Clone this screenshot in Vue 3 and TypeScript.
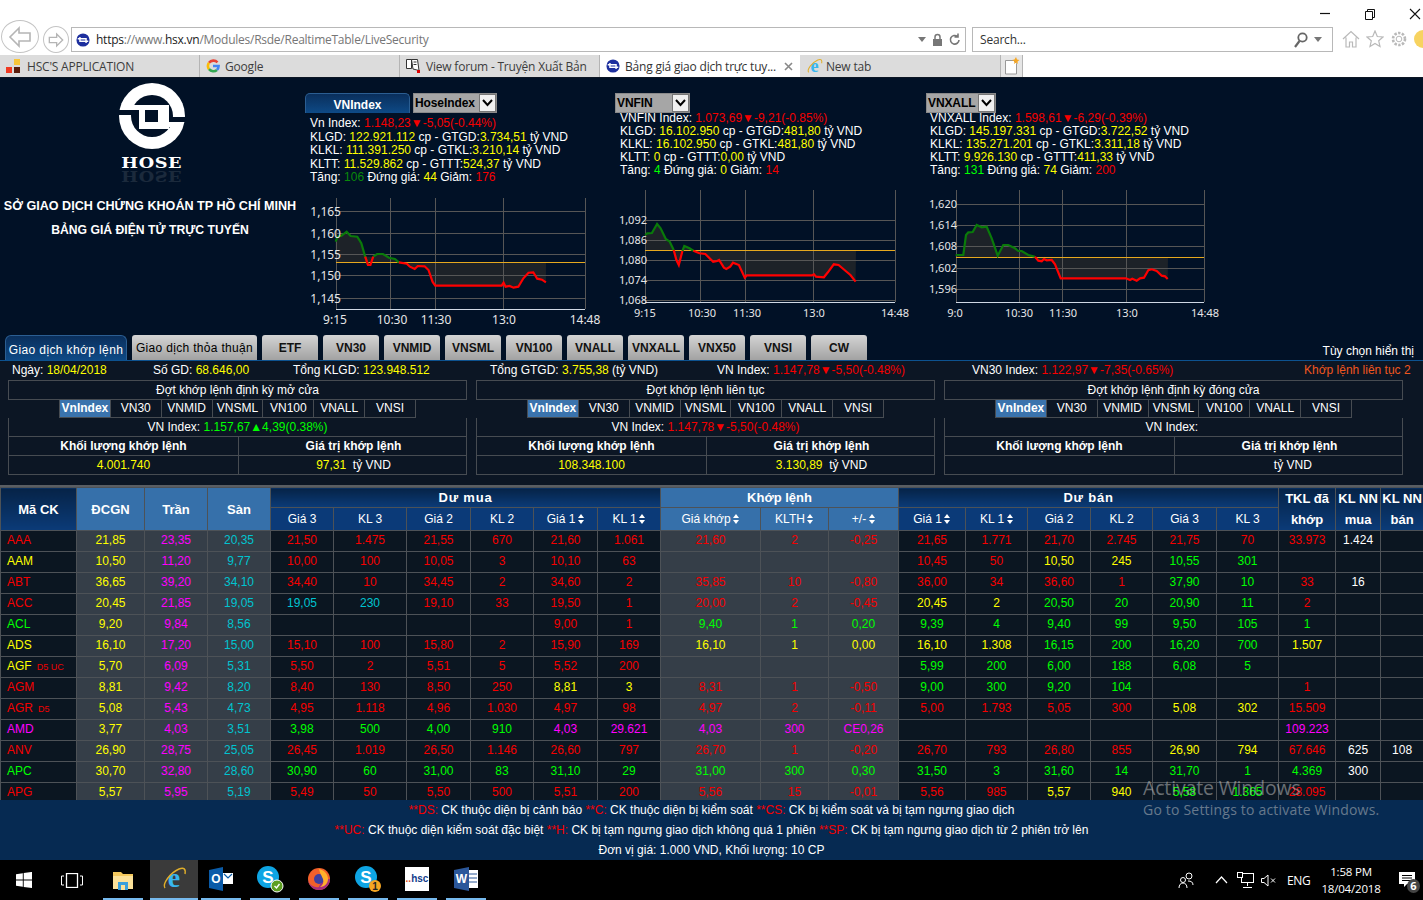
<script setup lang="ts">
type Seg = [string, string];

const browserTabs = ["Google", "View forum - Truyện Xuất Bản"];

const panels: { key: string; tight: boolean; lines: Seg[][] }[] = [
  {
    key: "vnindex",
    tight: false,
    lines: [
      [["Vn Index: ", "w"], ["1.148,23▼-5,05(-0.44%)", "r"]],
      [["KLGD: ", "w"], ["122.921.112", "y"], [" cp - GTGD:", "w"], ["3.734,51", "y"], [" tỷ VND", "w"]],
      [["KLKL: ", "w"], ["111.391.250", "y"], [" cp - GTKL:", "w"], ["3.210,14", "y"], [" tỷ VND", "w"]],
      [["KLTT: ", "w"], ["11.529.862", "y"], [" cp - GTTT:", "w"], ["524,37", "y"], [" tỷ VND", "w"]],
      [["Tăng: ", "w"], ["106", "dg"], [" Đứng giá: ", "w"], ["44", "y"], [" Giảm: ", "w"], ["176", "r"]],
    ],
  },
  {
    key: "vnfin",
    tight: true,
    lines: [
      [["VNFIN Index: ", "w"], ["1.073,69▼-9,21(-0.85%)", "r"]],
      [["KLGD: ", "w"], ["16.102.950", "y"], [" cp - GTGD:", "w"], ["481,80", "y"], [" tỷ VND", "w"]],
      [["KLKL: ", "w"], ["16.102.950", "y"], [" cp - GTKL:", "w"], ["481,80", "y"], [" tỷ VND", "w"]],
      [["KLTT: ", "w"], ["0", "y"], [" cp - GTTT:", "w"], ["0,00", "y"], [" tỷ VND", "w"]],
      [["Tăng: ", "w"], ["4", "g"], [" Đứng giá: ", "w"], ["0", "y"], [" Giảm: ", "w"], ["14", "r"]],
    ],
  },
  {
    key: "vnxall",
    tight: true,
    lines: [
      [["VNXALL Index: ", "w"], ["1.598,61▼-6,29(-0.39%)", "r"]],
      [["KLGD: ", "w"], ["145.197.331", "y"], [" cp - GTGD:", "w"], ["3.722,52", "y"], [" tỷ VND", "w"]],
      [["KLKL: ", "w"], ["135.271.201", "y"], [" cp - GTKL:", "w"], ["3.311,18", "y"], [" tỷ VND", "w"]],
      [["KLTT: ", "w"], ["9.926.130", "y"], [" cp - GTTT:", "w"], ["411,33", "y"], [" tỷ VND", "w"]],
      [["Tăng: ", "w"], ["131", "g"], [" Đứng giá: ", "w"], ["74", "y"], [" Giảm: ", "w"], ["200", "r"]],
    ],
  },
];

// points were read off the zoomed reference, so each chart has its own scale
const scale = (raw: number[][], ox: number, sx: number) =>
  raw.map(([x, y]) => [ox + x / sx, 185 + y / 3]);
const join = (p: number[][]) => p.map((q) => q.map((n) => n.toFixed(1)).join(",")).join(" ");

interface Chart {
  x0: number;
  size: number;
  top: number;
  bottom: number;
  left: number;
  right: number;
  rows: { y: number; label: string }[];
  cols: { x: number; label: string; at: number }[];
  labelY: number;
  labelX: number;
  refY: number;
  shadeEnd: number;
  green: string[];
  red: string[];
  shade: string;
}

const buildChart = (
  base: Omit<Chart, "green" | "red" | "shade">,
  greens: number[][][],
  reds: number[][][],
  all: number[][],
): Chart => ({
  ...base,
  green: greens.map(join),
  red: reds.map(join),
  shade:
    join(all) +
    ` ${base.shadeEnd},${base.refY} ${all[0][0]},${base.refY}`,
});

const c1g = scale([[90,170],[95,155],[105,152],[118,140],[128,153],[145,155],[155,175],[165,215],[172,240]], 300, 2.529);
const c1r0 = scale([[165,215],[172,240],[178,240],[185,215]], 300, 2.529);
const c1g2 = scale([[185,215],[195,207],[210,207],[225,218],[240,222],[250,232]], 300, 2.529);
const c1r = scale([[250,232],[270,236],[278,245],[290,252],[298,243],[315,244],[325,255],[335,290],[342,302],[510,302],[515,293],[520,305],[530,303],[540,308],[552,305],[565,280],[578,263],[590,262],[600,281],[612,284],[622,292]], 300, 2.529);

const c2g = scale([[873,150],[878,145],[890,144],[903,117],[912,130],[925,162],[935,170],[945,195]], 300, 2.529);
const c2r0 = scale([[945,195],[952,225],[958,240],[967,198]], 300, 2.529);
const c2g2 = scale([[967,198],[972,183],[985,190],[995,197]], 300, 2.529);
const c2r = scale([[995,197],[1010,205],[1025,207],[1045,230],[1055,228],[1060,225],[1072,248],[1078,252],[1088,245],[1095,233],[1110,240],[1125,278],[1130,271],[1295,271],[1300,268],[1305,275],[1325,277],[1335,262],[1350,238],[1362,240],[1380,258],[1392,270],[1405,290]], 300, 2.529);

const c3g = scale([[107,210],[130,210],[138,150],[145,142],[158,141],[170,120],[185,127],[200,125],[215,160],[233,212],[250,180],[265,180],[285,190],[295,198],[305,198],[325,210],[345,215]], 920, 3);
const c3r = scale([[345,215],[355,227],[365,229],[372,222],[380,226],[395,225],[405,238],[422,280],[618,280],[630,285],[637,281],[650,287],[660,280],[672,278],[685,256],[695,253],[710,258],[725,272],[735,274],[743,282]], 920, 3);

const charts: Chart[] = [
  buildChart(
    {
      x0: 305, size: 12, top: 198, bottom: 309, left: 336, right: 585,
      rows: [
        { y: 211, label: "1,165" }, { y: 233, label: "1,160" }, { y: 254, label: "1,155" },
        { y: 275, label: "1,150" }, { y: 298, label: "1,145" },
      ],
      cols: [
        { x: 336, label: "9:15", at: 335 }, { x: 390, label: "10:30", at: 392 }, { x: 435, label: "11:30", at: 436 },
        { x: 503, label: "13:0", at: 504 }, { x: 585, label: "14:48", at: 585 },
      ],
      labelY: 324, labelX: 341, refY: 262, shadeEnd: 546,
    },
    [c1g, c1g2], [c1r0, c1r], [...c1g.slice(0, 8), ...c1g2, ...c1r],
  ),
  buildChart(
    {
      x0: 615, size: 11, top: 190, bottom: 302, left: 645, right: 895,
      rows: [
        { y: 220, label: "1,092" }, { y: 240, label: "1,086" }, { y: 260, label: "1,080" },
        { y: 280, label: "1,074" }, { y: 300, label: "1,068" },
      ],
      cols: [
        { x: 645, label: "9:15", at: 645 }, { x: 700, label: "10:30", at: 702 }, { x: 745, label: "11:30", at: 747 },
        { x: 813, label: "13:0", at: 814 }, { x: 895, label: "14:48", at: 895 },
      ],
      labelY: 317, labelX: 647, refY: 250, shadeEnd: 856,
    },
    [c2g, c2g2], [c2r0, c2r], [...c2g, ...c2r0, ...c2g2, ...c2r],
  ),
  buildChart(
    {
      x0: 925, size: 11, top: 190, bottom: 302, left: 956, right: 1204,
      rows: [
        { y: 204, label: "1,620" }, { y: 225, label: "1,614" }, { y: 246, label: "1,608" },
        { y: 268, label: "1,602" }, { y: 289, label: "1,596" },
      ],
      cols: [
        { x: 956, label: "9:0", at: 955 }, { x: 1019, label: "10:30", at: 1019 }, { x: 1062, label: "11:30", at: 1063 },
        { x: 1126, label: "13:0", at: 1127 }, { x: 1204, label: "14:48", at: 1205 },
      ],
      labelY: 317, labelX: 957, refY: 257, shadeEnd: 1168,
    },
    [c3g], [c3r], [...c3g, ...c3r],
  ),
];

const marketTabs = [
  { label: "Giao dịch thỏa thuận", wide: true },
  ...["ETF", "VN30", "VNMID", "VNSML", "VN100", "VNALL", "VNXALL", "VNX50", "VNSI", "CW"].map((label) => ({ label, wide: false })),
];

const sessionTabs = ["VnIndex", "VN30", "VNMID", "VNSML", "VN100", "VNALL", "VNSI"];
const sessions: { title: string; index: Seg[]; vol: string; val: string }[] = [
  { title: "Đợt khớp lệnh định kỳ mở cửa", index: [["1.157,67▲4,39(0.38%)", "g"]], vol: "4.001.740", val: "97,31" },
  { title: "Đợt khớp lệnh liên tục", index: [["1.147,78▼-5,50(-0.48%)", "r"]], vol: "108.348.100", val: "3.130,89" },
  { title: "Đợt khớp lệnh định kỳ đóng cửa", index: [], vol: "", val: "" },
];

const colWidths = [76, 68, 63, 63, 63, 73, 64, 63, 64, 63, 100, 68, 70, 67, 62, 63, 62, 64, 62, 57, 45, 43];

const buyHead = [
  { t: "Giá 3" }, { t: "KL 3" }, { t: "Giá 2" }, { t: "KL 2" }, { t: "Giá 1", sort: true }, { t: "KL 1", sort: true },
];
const matchHead = [{ t: "Giá khớp", sort: true }, { t: "KLTH", sort: true }, { t: "+/-", sort: true }];
const sellHead = [
  { t: "Giá 1", sort: true }, { t: "KL 1", sort: true }, { t: "Giá 2" }, { t: "KL 2" }, { t: "Giá 3" }, { t: "KL 3" },
];

// first letter of each cell is its colour, "_" is an empty cell
const rawRows: [string, string, string, string, string, string, string][] = [
  ["r", "AAA", "", "21,85", "23,35", "20,35", "r21,50 r1.475 r21,55 r670 r21,60 r1.061 r21,60 r2 r-0,25 r21,65 r1.771 r21,70 r2.745 r21,75 r70 r33.973 w1.424 _"],
  ["y", "AAM", "", "10,50", "11,20", "9,77", "r10,00 r100 r10,05 r3 r10,10 r63 _ _ _ r10,45 r50 y10,50 y245 g10,55 g301 _ _ _"],
  ["r", "ABT", "", "36,65", "39,20", "34,10", "r34,40 r10 r34,45 r2 r34,60 r2 r35,85 r10 r-0,80 r36,00 r34 r36,60 r1 g37,90 g10 r33 w16 _"],
  ["r", "ACC", "", "20,45", "21,85", "19,05", "c19,05 c230 r19,10 r33 r19,50 r1 r20,00 r2 r-0,45 y20,45 y2 g20,50 g20 g20,90 g11 r2 _ _"],
  ["g", "ACL", "", "9,20", "9,84", "8,56", "_ _ _ _ r9,00 r1 g9,40 g1 g0,20 g9,39 g4 g9,40 g99 g9,50 g105 g1 _ _"],
  ["y", "ADS", "", "16,10", "17,20", "15,00", "r15,10 r100 r15,80 r2 r15,90 r169 y16,10 y1 y0,00 y16,10 y1.308 g16,15 g200 g16,20 g700 y1.507 _ _"],
  ["y", "AGF", "D5 UC", "5,70", "6,09", "5,31", "r5,50 r2 r5,51 r5 r5,52 r200 _ _ _ g5,99 g200 g6,00 g188 g6,08 g5 _ _ _"],
  ["r", "AGM", "", "8,81", "9,42", "8,20", "r8,40 r130 r8,50 r250 y8,81 y3 r8,31 r1 r-0,50 g9,00 g300 g9,20 g104 _ _ r1 _ _"],
  ["r", "AGR", "D5", "5,08", "5,43", "4,73", "r4,95 r1.118 r4,96 r1.030 r4,97 r98 r4,97 r2 r-0,11 r5,00 r1.793 r5,05 r300 y5,08 y302 r15.509 _ _"],
  ["m", "AMD", "", "3,77", "4,03", "3,51", "g3,98 g500 g4,00 g910 m4,03 m29.621 m4,03 m300 mCE0,26 _ _ _ _ _ _ m109.223 _ _"],
  ["r", "ANV", "", "26,90", "28,75", "25,05", "r26,45 r1.019 r26,50 r1.146 r26,60 r797 r26,70 r1 r-0,20 r26,70 r793 r26,80 r855 y26,90 y794 r67.646 w625 w108"],
  ["g", "APC", "", "30,70", "32,80", "28,60", "g30,90 g60 g31,00 g83 g31,10 g29 g31,00 g300 g0,30 g31,50 g3 g31,60 g14 g31,70 g1 g4.369 w300 _"],
  ["r", "APG", "", "5,57", "5,95", "5,19", "r5,49 r50 r5,50 r500 r5,51 r200 r5,56 r15 r-0,01 r5,56 r985 y5,57 y940 g5,58 g1.365 r28.095 _ _"],
];

const rows = rawRows.map(([color, sym, tag, ref, ceil, floor, rest]) => ({
  color,
  sym,
  tag,
  ref,
  ceil,
  floor,
  cells: rest.split(" ").map((c) => (c === "_" ? { color: "", text: "" } : { color: c[0], text: c.slice(1) })),
}));

const dockApps = ["explorer", "ie", "outlook", "skype", "firefox", "skype2", "hsc", "word"];
</script>

<template>
  <div class="page">
    <!-- browser chrome -->
    <div class="titlebar">
      <svg class="winbtn" width="12" height="12" viewBox="0 0 12 12"><path d="M1 5.500h10" stroke="#111" stroke-width="1.200" /></svg>
      <svg class="winbtn" width="12" height="12" viewBox="0 0 12 12" fill="none" stroke="#111"><path d="M1.500 3.500h7v8h-7zM3.500 3.500v-2h7v8h-2" /></svg>
      <svg class="winbtn last" width="12" height="12" viewBox="0 0 12 12"><path d="M1 1l10 10M11 1L1 11" stroke="#111" stroke-width="1.100" /></svg>
    </div>
    <div class="navrow">
      <div class="nav-back">
        <svg width="24" height="24" viewBox="0 0 24 24" fill="none" stroke="#b5b5b5" stroke-width="1.600"><path d="M11 3L2 12l9 9v-5h11V8H11z" /></svg>
      </div>
      <div class="nav-fwd">
        <svg width="16" height="16" viewBox="0 0 24 24" fill="none" stroke="#b5b5b5" stroke-width="2"><path d="M13 3l9 9-9 9v-5H2V8h11z" /></svg>
      </div>
      <div class="addr">
        <svg width="14" height="14" viewBox="0 0 16 16"><circle cx="8" cy="8" r="7.500" fill="#1d2f9e" /><path d="M2 6.500h9.500v5M14 9.500H4.500v-5" fill="none" stroke="#fff" stroke-width="1.600" /></svg>
        <span class="url"><b>https</b>://www.<b>hsx.vn</b>/Modules/Rsde/RealtimeTable/LiveSecurity</span>
        <svg width="8" height="5" viewBox="0 0 8 5"><path d="M0 0h8L4 5z" fill="#777" /></svg>
        <svg width="11" height="14" viewBox="0 0 11 14"><path d="M3 6V4a2.500 2.500 0 015 0v2" fill="none" stroke="#777" stroke-width="1.500" /><rect x="1" y="6" width="9" height="7" fill="#777" /></svg>
        <svg width="12" height="13" viewBox="0 0 12 13" fill="none" stroke="#777" stroke-width="1.600"><path d="M10 7a4.300 4.300 0 11-1.500-3.500M9 .5v3.500H5.500" /></svg>
      </div>
      <div class="search">
        <span class="search-text">Search...</span>
        <svg width="14" height="16" viewBox="0 0 14 16" fill="none" stroke="#666" stroke-width="1.800"><circle cx="8.500" cy="5.500" r="4.200" /><path d="M5.500 9l-4.500 6" stroke-width="2.200" /></svg>
        <svg width="8" height="5" viewBox="0 0 8 5"><path d="M0 0h8L4 5z" fill="#777" /></svg>
      </div>
      <div class="tools">
        <svg width="18" height="18" viewBox="0 0 18 18" fill="none" stroke="#b9b9b9" stroke-width="1.200"><path d="M1 9l8-7.500L17 9M4 7.500V17h3.500v-5h3v5H14V7.500" /></svg>
        <svg width="18" height="18" viewBox="0 0 18 18" fill="none" stroke="#b9b9b9" stroke-width="1.200"><path d="M9 1l2.300 5.500 5.700.5-4.300 3.800 1.300 5.700L9 13.500 4 16.500l1.300-5.700L1 7l5.700-.5z" /></svg>
        <svg width="18" height="18" viewBox="0 0 18 18" fill="none" stroke="#b9b9b9"><circle cx="9" cy="9" r="2.800" /><circle cx="9" cy="9" r="6" stroke-width="2.600" stroke-dasharray="2.400 1.400" /></svg>
        <span class="smiley"></span>
      </div>
    </div>
    <div class="tabrow">
      <div class="btab">
        <svg width="16" height="18" viewBox="0 0 16 18"><rect x="0" y="10" width="6" height="6" fill="#f03a22" /><rect x="8" y="2" width="6" height="6" fill="#f8c53a" /><rect x="8" y="10" width="6" height="6" fill="#5a1c0c" /></svg>
        <span>HSC'S APPLICATION</span>
      </div>
      <div v-for="(t, i) in browserTabs" :key="t" class="btab">
        <svg v-if="i === 0" width="14" height="14" viewBox="0 0 14 14" fill="none" stroke-width="2.600">
          <path d="M11.500 3.300A5.700 5.700 0 003 3.800" stroke="#e94335" />
          <path d="M3 3.800a5.700 5.700 0 000 6.400" stroke="#fbbc05" />
          <path d="M3 10.200a5.700 5.700 0 008 .7" stroke="#34a853" />
          <path d="M11 10.900a5.700 5.700 0 001.600-3.900H7" stroke="#4285f4" />
        </svg>
        <svg v-else width="15" height="16" viewBox="0 0 15 16" fill="#fff" stroke="#333"><path d="M.5 1.500h5v9h-5zM5.500 1.500h6l1.500 11-6-1.500z" /><path d="M7.500 4h3M7.500 6.500h3" /><rect x="11" y="12" width="3" height="3" fill="#d00" stroke="none" /></svg>
        <span>{{ t }}</span>
      </div>
      <div class="btab active">
        <svg width="14" height="14" viewBox="0 0 16 16"><circle cx="8" cy="8" r="7.500" fill="#1d2f9e" /><path d="M2 6.500h9.500v5M14 9.500H4.500v-5" fill="none" stroke="#fff" stroke-width="1.600" /></svg>
        <span class="active-label">Bảng giá giao dịch trực tuy...</span>
        <svg width="9" height="9" viewBox="0 0 9 9"><path d="M1 1l7 7M8 1L1 8" stroke="#888" stroke-width="1.600" /></svg>
      </div>
      <div class="btab newtab">
        <svg class="ie-icon" width="17" height="17" viewBox="0 0 26 26">
          <text x="13" y="21" text-anchor="middle" font-size="28" font-weight="700" fill="#38b6ee" font-family="Liberation Serif, serif">e</text>
          <path d="M4 22C1 18 9 7 18 3c5-2 7 0 6 5" fill="none" stroke="#e0ae2a" stroke-width="1.600" />
        </svg>
        <span>New tab</span>
      </div>
      <div class="btab plus">
        <svg width="16" height="18" viewBox="0 0 16 18"><path d="M1.500 3.500h8l3 3v10.500h-11z" fill="#fff" stroke="#999" /><path d="M12 0l1 2.500 2.500.5-2 1.500.3 2.500-1.800-1.500-2 1.500.5-2.500L8 3l2.500-.5z" fill="#f5a623" /></svg>
      </div>
    </div>

    <!-- index header -->
    <div class="header">
      <div class="brand">
        <svg class="logo" width="66" height="66" viewBox="0 0 66 66">
          <circle cx="33" cy="33" r="33" fill="#fff" />
          <circle cx="33" cy="33" r="21" fill="#011126" />
          <path d="M0 27h14v5H0zM52 34h14v5H52z" fill="#011126" />
          <path d="M3 22h47v5H3zM39 22h11v24H39zM20 39h44v5H20zM20 22h6v24h-6zM20 44h30v2H20z" fill="#fff" />
          <rect x="26" y="27" width="13" height="12" fill="#011126" />
        </svg>
        <div class="hose">HOSE</div>
        <div class="hose mirror">HOSE</div>
        <div class="brand-title">SỞ GIAO DỊCH CHỨNG KHOÁN TP HỒ CHÍ MINH</div>
        <div class="brand-sub">BẢNG GIÁ ĐIỆN TỬ TRỰC TUYẾN</div>
      </div>

      <div v-for="(p, i) in panels" :key="p.key" class="panel">
        <div class="panel-head">
          <template v-if="i === 0">
            <div class="head-tab">VNIndex</div>
            <div class="pick wide">
              <span class="pick-name">HoseIndex</span>
              <span class="pick-arrow"><svg width="11" height="8" viewBox="0 0 11 8"><path d="M1 1l4.500 5L10 1" fill="none" stroke="#000" stroke-width="2" /></svg></span>
            </div>
          </template>
          <div v-else class="pick" :class="i === 1 ? 'fin' : 'xall'">
            <span class="pick-name">{{ i === 1 ? "VNFIN" : "VNXALL" }}</span>
            <span class="pick-arrow"><svg width="11" height="8" viewBox="0 0 11 8"><path d="M1 1l4.500 5L10 1" fill="none" stroke="#000" stroke-width="2" /></svg></span>
          </div>
        </div>
        <div class="info" :class="{ tight: p.tight }">
          <div v-for="(line, n) in p.lines" :key="n"><span v-for="(seg, s) in line" :key="s" :class="seg[1]">{{ seg[0] }}</span></div>
        </div>
        <svg class="chart" width="310" height="145" :viewBox="`${charts[i].x0} 185 310 145`">
          <polygon :points="charts[i].shade" fill="#1d2228" />
          <line v-for="r in charts[i].rows" :key="r.label" :x1="charts[i].left" :x2="charts[i].right" :y1="r.y + 0.5" :y2="r.y + 0.5" stroke="#565656" />
          <line v-for="c in charts[i].cols" :key="c.label" :x1="c.x + 0.5" :x2="c.x + 0.5" :y1="charts[i].top" :y2="charts[i].bottom" stroke="#565656" />
          <line :x1="charts[i].left" :x2="charts[i].right" :y1="charts[i].bottom + 0.5" :y2="charts[i].bottom + 0.5" stroke="#cfd8e4" />
          <line :x1="charts[i].left" :x2="charts[i].right" :y1="charts[i].refY + 0.5" :y2="charts[i].refY + 0.5" stroke="#e6a81e" />
          <polyline v-for="(g, n) in charts[i].green" :key="'g' + n" :points="g" fill="none" stroke="#0a7a0a" stroke-width="2.200" />
          <polyline v-for="(g, n) in charts[i].red" :key="'r' + n" :points="g" fill="none" stroke="#f00" stroke-width="2.200" />
          <text v-for="r in charts[i].rows" :key="'l' + r.label" :x="charts[i].labelX" :y="r.y + (i === 0 ? 5 : 4)" text-anchor="end" :font-size="charts[i].size" class="chart-label">{{ r.label }}</text>
          <text v-for="c in charts[i].cols" :key="'t' + c.label" :x="c.at" :y="charts[i].labelY" text-anchor="middle" :font-size="charts[i].size" class="chart-label">{{ c.label }}</text>
        </svg>
      </div>
    </div>

    <!-- market tabs -->
    <div class="mtabs">
      <div class="mtab active">Giao dịch khớp lệnh</div>
      <div v-for="t in marketTabs" :key="t.label" class="mtab" :class="{ wide: t.wide }">{{ t.label }}</div>
      <div class="mtabs-opt">Tùy chọn hiển thị</div>
    </div>

    <div class="body">
      <div class="summary">
        <span class="s-date"><span class="w">Ngày: </span><span class="y">18/04/2018</span></span>
        <span class="s-gd"><span class="w">Số GD: </span><span class="y">68.646,00</span></span>
        <span class="s-kl"><span class="w">Tổng KLGD: </span><span class="y">123.948.512</span></span>
        <span class="s-gt"><span class="w">Tổng GTGD: </span><span class="y">3.755,38</span><span class="w"> (tỷ VND)</span></span>
        <span class="s-vn"><span class="w">VN Index: </span><span class="r">1.147,78▼-5,50(-0.48%)</span></span>
        <span class="s-30"><span class="w">VN30 Index: </span><span class="r">1.122,97▼-7,35(-0.65%)</span></span>
        <span class="s-state">Khớp lệnh liên tục 2</span>
      </div>

      <div class="sessions">
        <div v-for="s in sessions" :key="s.title" class="box">
          <div class="box-title">{{ s.title }}</div>
          <div class="box-tabs">
            <span v-for="(t, i) in sessionTabs" :key="t" class="box-tab" :class="{ on: i === 0 }">{{ t }}</span>
          </div>
          <div class="box-index">
            <span class="w">VN Index: </span><span v-for="seg in s.index" :key="seg[0]" :class="seg[1]">{{ seg[0] }}</span>
          </div>
          <div class="box-pair head">
            <div>Khối lượng khớp lệnh</div>
            <div>Giá trị khớp lệnh</div>
          </div>
          <div class="box-pair vals">
            <div class="y">{{ s.vol }}</div>
            <div><span class="y">{{ s.val }}</span><span class="w"> &nbsp;tỷ VND</span></div>
          </div>
        </div>
      </div>

      <div class="tablewrap">
        <table class="board">
          <colgroup>
            <col v-for="(w, i) in colWidths" :key="i" :style="{ width: w + 'px' }" />
          </colgroup>
          <thead>
            <tr class="tr-top">
              <th rowspan="2" class="dark big">Mã CK</th>
              <th rowspan="2" class="light big">ĐCGN</th>
              <th rowspan="2" class="light big">Trần</th>
              <th rowspan="2" class="light big">Sàn</th>
              <th colspan="6" class="dark big wide-text">Dư mua</th>
              <th colspan="3" class="light big">Khớp lệnh</th>
              <th colspan="6" class="dark big wide-text">Dư bán</th>
              <th rowspan="2" class="dark big stack">TKL đã<br />khớp</th>
              <th rowspan="2" class="dark big stack">KL NN<br />mua</th>
              <th rowspan="2" class="dark big stack">KL NN<br />bán</th>
            </tr>
            <tr class="tr-sub">
              <th v-for="h in buyHead" :key="'b' + h.t" class="navy">{{ h.t }}<span v-if="h.sort" class="sort"></span></th>
              <th v-for="h in matchHead" :key="'m' + h.t" class="light">{{ h.t }}<span class="sort"></span></th>
              <th v-for="h in sellHead" :key="'s' + h.t" class="navy">{{ h.t }}<span v-if="h.sort" class="sort"></span></th>
            </tr>
          </thead>
          <tbody>
            <tr v-for="r in rows" :key="r.sym">
              <td class="sym" :class="r.color">{{ r.sym }}<small v-if="r.tag" class="tag">{{ r.tag }}</small></td>
              <td class="grey y">{{ r.ref }}</td>
              <td class="grey m">{{ r.ceil }}</td>
              <td class="grey c">{{ r.floor }}</td>
              <td
                v-for="(c, i) in r.cells"
                :key="i"
                :class="[c.color, { grey: i >= 6 && i <= 8 }]"
              >{{ c.text }}</td>
            </tr>
          </tbody>
        </table>
      </div>
    </div>

    <div class="legend">
      <div><span class="r">**DS:</span> CK thuộc diện bị cảnh báo <span class="r">**C:</span> CK thuộc diện bị kiểm soát <span class="r">**CS:</span> CK bị kiểm soát và bị tạm ngưng giao dịch</div>
      <div><span class="r">**UC:</span> CK thuộc diện kiểm soát đặc biệt <span class="r">**H:</span> CK bị tạm ngưng giao dịch không quá 1 phiên <span class="r">**SP:</span> CK bị tạm ngưng giao dịch từ 2 phiên trở lên</div>
      <div>Đơn vị giá: 1.000 VND, Khối lượng: 10 CP</div>
    </div>

    <div class="watermark">
      <div class="wm-big">Activate Windows</div>
      <div class="wm-small">Go to Settings to activate Windows.</div>
    </div>

    <!-- windows taskbar -->
    <div class="taskbar">
      <div class="tb-start">
        <svg width="16" height="16" viewBox="0 0 16 16" fill="#fff"><path d="M0 2.200l6.800-1V7.500H0zM7.700 1l8.300-1.100V7.500H7.700zM0 8.400h6.800v6.400L0 13.800zM7.700 8.400H16V16l-8.300-1.100z" /></svg>
      </div>
      <div class="tb-view">
        <svg width="22" height="15" viewBox="0 0 22 15" fill="none" stroke="#fff"><rect x="5.500" y=".5" width="11" height="14" stroke-width="1.300" /><path d="M3 3H.5v9H3M19 3h2.500v9H19" /></svg>
      </div>
      <div v-for="a in dockApps" :key="a" class="tb-app" :class="[a, { current: a === 'ie' }]">
        <svg v-if="a === 'explorer'" width="24" height="24" viewBox="0 0 24 24">
          <path d="M2 5h8l2 2h10v15H2z" fill="#f4c95d" />
          <rect x="2" y="9" width="20" height="13" fill="#fce29a" />
          <rect x="7" y="15" width="10" height="8" fill="#3aa0dc" />
          <rect x="10" y="18" width="4" height="5" fill="#fce29a" />
        </svg>
        <svg v-else-if="a === 'ie'" class="ie-icon" width="26" height="26" viewBox="0 0 26 26">
          <text x="13" y="21" text-anchor="middle" font-size="28" font-weight="700" fill="#38b6ee" font-family="Liberation Serif, serif">e</text>
          <path d="M4 22C1 18 9 7 18 3c5-2 7 0 6 5" fill="none" stroke="#e0ae2a" stroke-width="1.400" />
        </svg>
        <svg v-else-if="a === 'outlook'" width="24" height="26" viewBox="0 0 24 26">
          <path d="M0 4l14-3v24L0 22z" fill="#0a5ba8" />
          <rect x="14" y="7" width="10" height="11" fill="#fff" />
          <path d="M15 8l4 4 4-4" fill="none" stroke="#0a5ba8" stroke-width="1.200" />
          <text x="7" y="17" text-anchor="middle" font-size="12" font-weight="700" fill="#fff" font-family="Liberation Sans, sans-serif">O</text>
        </svg>
        <svg v-else-if="a === 'skype' || a === 'skype2'" width="28" height="28" viewBox="0 0 28 28">
          <circle cx="12" cy="12" r="11" fill="#0ea5e4" />
          <text x="12" y="18" text-anchor="middle" font-size="17" font-weight="700" fill="#fff" font-family="Liberation Sans, sans-serif">S</text>
          <template v-if="a === 'skype'">
            <circle cx="21" cy="21" r="6" fill="#5d9e22" stroke="#fff" />
            <path d="M18.500 21l2 2 3-4" fill="none" stroke="#fff" stroke-width="1.400" />
          </template>
          <template v-else>
            <circle cx="21" cy="21" r="6" fill="#f6a623" />
            <text x="21" y="25" text-anchor="middle" font-size="10" font-weight="700" fill="#222" font-family="Liberation Sans, sans-serif">1</text>
          </template>
        </svg>
        <svg v-else-if="a === 'firefox'" width="24" height="24" viewBox="0 0 24 24">
          <circle cx="12" cy="12" r="11" fill="#f2602a" />
          <path d="M1 12a11 11 0 0022 0A11 11 0 0012 20 9 9 0 011 12z" fill="#a62e7e" />
          <circle cx="12" cy="12" r="5" fill="#3d3fa0" />
          <path d="M12 2c5 1 9 5 9 10 0 4-3 8-8 8 3-2 4-5 3-8s-3-5-4-10z" fill="#ffb02b" />
        </svg>
        <div v-else-if="a === 'hsc'" class="hsc-icon"><span class="hsc-dots">..</span>hsc</div>
        <svg v-else-if="a === 'word'" width="24" height="24" viewBox="0 0 24 24">
          <rect x="12" y="3" width="12" height="18" fill="#fff" />
          <path d="M13 7h10M13 11h10M13 15h10" stroke="#2b5797" />
          <path d="M0 3l15-3v24L0 21z" fill="#2b579a" />
          <text x="7.500" y="16" text-anchor="middle" font-size="12" font-weight="700" fill="#fff" font-family="Liberation Sans, sans-serif">W</text>
        </svg>
      </div>
      <div class="tray">
        <svg class="t-people" width="16" height="17" viewBox="0 0 16 17" fill="none" stroke="#fff"><circle cx="11" cy="4" r="3" /><circle cx="5" cy="8" r="2.500" /><path d="M1 16c0-3 1.500-5 4-5s4 2 4 5M10 9c3 0 5 1 5 4" /></svg>
        <svg class="t-caret" width="13" height="8" viewBox="0 0 13 8"><path d="M1 7l5.500-6L12 7" fill="none" stroke="#fff" stroke-width="1.200" /></svg>
        <svg class="t-net" width="17" height="16" viewBox="0 0 17 16" fill="none" stroke="#fff"><rect x="4.500" y="1.500" width="12" height="9" /><rect x=".5" y=".5" width="5" height="5" fill="#000" /><path d="M10.500 11v3M6 15.500h9" /></svg>
        <svg class="t-vol" width="15" height="13" viewBox="0 0 15 13" fill="none" stroke="#fff"><path d="M.5 4.500h2.500l4-3.500v11l-4-3.500H.5z" /><path d="M10 4.500l4 4M14 4.500l-4 4" /></svg>
        <span class="t-lang">ENG</span>
        <div class="t-clock">
          <div>1:58 PM</div>
          <div>18/04/2018</div>
        </div>
        <div class="t-note">
          <svg width="16" height="16" viewBox="0 0 16 16"><path d="M0 0h16v12H8l-3 3v-3H0z" fill="#fff" /><path d="M3 3.500h10M3 6h10M3 8.500h10" stroke="#000" /></svg>
          <span class="t-badge">6</span>
        </div>
      </div>
    </div>
  </div>
</template>

<style scoped>
.page {
  position: relative;
  width: 1423px;
  height: 900px;
  overflow: hidden;
  background: #0c1624;
  font-family: "Liberation Sans", Arial, sans-serif;
  font-size: 12px;
  color: #fff;
}
.r { color: #f50000; }
.y { color: #ffff00; }
.m { color: #ff00ff; }
.c { color: #00c4d0; }
.g { color: #00ff00; }
.dg { color: #0a8a0a; }
.w { color: #fff; }

/* browser */
.titlebar {
  height: 20px;
  background: #fff;
  display: flex;
  justify-content: flex-end;
  align-items: flex-end;
}
.winbtn { margin-left: 33px; }
.winbtn.last { margin-right: 2px; }
.navrow {
  height: 35px;
  background: #fff;
  display: flex;
  align-items: flex-start;
  font-family: "Open Sans", sans-serif;
  color: #333;
}
.nav-back {
  width: 36px;
  height: 31px;
  margin-left: 1px;
  border: 1px solid #c4c4c4;
  border-radius: 50%;
  display: flex;
  align-items: center;
  justify-content: center;
  flex: none;
  box-sizing: content-box;
}
.nav-fwd {
  width: 24px;
  height: 25px;
  margin: 6px 0 0 4px;
  border: 1px solid #c4c4c4;
  border-radius: 50%;
  display: flex;
  align-items: center;
  justify-content: center;
  flex: none;
}
.addr, .search {
  height: 23px;
  margin-top: 7px;
  border: 1px solid #b8b8b8;
  display: flex;
  align-items: center;
  box-sizing: content-box;
  flex: none;
}
.addr {
  width: 885px;
  margin-left: 2px;
  padding: 0 4px;
  gap: 6px;
}
.url {
  flex: 1;
  color: #767676;
  font-size: 12px;
  letter-spacing: -0.25px;
}
.url b { font-weight: 400; color: #222; }
.search {
  width: 342px;
  margin-left: 6px;
  padding: 0 10px 0 7px;
  gap: 6px;
}
.search-text { flex: 1; font-size: 12px; letter-spacing: -0.2px; color: #333; }
.tools {
  display: flex;
  gap: 6px;
  margin: 10px 0 0 9px;
  flex: none;
}
.smiley {
  width: 18px;
  height: 18px;
  border-radius: 50%;
  background: #f7d360;
}
.tabrow {
  height: 22px;
  margin-bottom: 1px;
  background: #fff;
  display: flex;
  font-family: "Open Sans", sans-serif;
  font-size: 12px;
  letter-spacing: -0.2px;
  color: #3d3d3d;
}
.btab {
  width: 200px;
  height: 22px;
  box-sizing: border-box;
  background: #dcdcdc;
  border-right: 1px solid #b4b4b4;
  display: flex;
  align-items: center;
  padding-left: 6px;
  gap: 5px;
  flex: none;
  white-space: nowrap;
}
.btab.active { background: #fff; border-right: none; color: #333; }
.active-label { flex: 1; }
.btab.active svg:last-child { margin-right: 7px; }
.btab.newtab { width: 201px; padding-left: 6px; gap: 3px; }
.btab.plus {
  width: 22px;
  padding-left: 3px;
  border-right: 1px solid #b4b4b4;
  background: #e6e6e6;
}
.ie-icon { overflow: visible; }

/* header */
.header {
  height: 257px;
  background: #011126;
  display: flex;
  box-sizing: border-box;
}
.brand {
  width: 305px;
  flex: none;
  display: flex;
  flex-direction: column;
  align-items: center;
  font-weight: 700;
}
.logo { margin: 5px 0 0 -2px; }
.hose {
  margin: 7px 0 0 -2px;
  height: 14px;
  line-height: 14px;
  font-family: "DejaVu Serif", serif;
  font-size: 15px;
  font-weight: 700;
  transform: scaleX(1.180);
  letter-spacing: 0.5px;
}
.mirror {
  margin-top: 0;
  transform: scaleX(1.180) scaleY(-1);
  opacity: 0.1;
  height: 11px;
  line-height: 11px;
}
.brand-title {
  margin: 17px 5px 0 0;
  height: 16px;
  line-height: 16px;
  white-space: nowrap;
  font-size: 12.600px;
}
.brand-sub {
  margin: 8px 5px 0 0;
  height: 16px;
  line-height: 16px;
  font-size: 12.200px;
}
.panel {
  width: 310px;
  flex: none;
  position: relative;
  padding-top: 15px;
}
.panel-head {
  height: 20px;
  display: flex;
  gap: 3px;
}
.head-tab {
  width: 105px;
  height: 20px;
  box-sizing: border-box;
  text-align: center;
  line-height: 22px;
  font-weight: 700;
  background: linear-gradient(#0a2f5c, #0e4a86);
  border: 1px solid #2b5e92;
  border-bottom: none;
  border-radius: 5px 5px 0 0;
}
.pick {
  height: 20px;
  box-sizing: border-box;
  background: #a6a6a6;
  border: 1px solid #8a8a8a;
  color: #000;
  font-weight: 700;
  display: flex;
  align-items: center;
  justify-content: space-between;
  padding-left: 1px;
  letter-spacing: -0.1px;
}
.pick.wide { width: 84px; }
.pick.fin { width: 75px; }
.pick.xall { width: 70px; margin-left: 1px; }
.pick-arrow {
  width: 17px;
  height: 18px;
  background: #f0f0f0;
  border: 1px solid #777;
  box-sizing: border-box;
  display: flex;
  align-items: center;
  justify-content: center;
}
.info {
  height: 68px;
  padding-left: 5px;
  line-height: 13.600px;
  padding-top: 4px;
  white-space: pre;
  font-size: 12px;
}
.info.tight {
  line-height: 13px;
  padding-top: 0;
  margin-top: -1px;
  height: 73px;
}
.chart { display: block; }
.chart-label {
  fill: #e6e6e6;
  font-family: "Noto Sans", sans-serif;
}

/* market tabs */
.mtabs {
  height: 25px;
  background: #011126;
  border-bottom: 1px solid #0d528f;
  display: flex;
  gap: 5px;
  padding-left: 5px;
  position: relative;
  align-items: flex-end;
}
.mtab {
  width: 56px;
  height: 25px;
  box-sizing: border-box;
  border-radius: 3px 3px 0 0;
  background: linear-gradient(#d4d4d4, #a2a2a2);
  color: #111;
  text-align: center;
  line-height: 26px;
  font-weight: 700;
  white-space: nowrap;
}
.mtab.wide { width: 125px; font-weight: 400; color: #000; letter-spacing: 0.32px; }
.mtab.active {
  width: 122px;
  background: linear-gradient(#0a2f5c, #0e4a86);
  color: #fff;
  font-weight: 400;
  border: 1px solid #2b5e92;
  border-bottom: none;
  border-radius: 6px 6px 0 0;
  line-height: 29px;
  letter-spacing: 0.38px;
}
.mtabs-opt {
  margin-left: auto;
  padding-right: 9px;
  line-height: 18px;
  height: 18px;
}

/* summary */
.body {
  height: 439px;
  overflow: hidden;
}
.summary {
  height: 19px;
  line-height: 18px;
  display: flex;
  white-space: pre;
}
.s-date { width: 141px; margin-left: 12px; }
.s-gd { width: 140px; }
.s-kl { width: 197px; }
.s-gt { width: 227px; }
.s-vn { width: 255px; }
.s-30 { width: 332px; }
.s-state { color: #f0561f; }
.sessions {
  display: flex;
  gap: 9px;
  padding-left: 8px;
  height: 96px;
}
.box {
  width: 459px;
  text-align: center;
  flex: none;
  display: flex;
  flex-direction: column;
  white-space: pre;
}
.box-title {
  height: 20px;
  box-sizing: border-box;
  line-height: 18px;
  border: 1px solid #474c52;
}
.box-tabs {
  height: 18px;
  width: 357px;
  align-self: center;
  display: grid;
  grid-template-columns: repeat(7, 1fr);
  box-sizing: border-box;
  border-bottom: 1px solid #474c52;
  border-left: 1px solid #474c52;
}
.box-tab {
  line-height: 17px;
  border-right: 1px solid #474c52;
}
.box-tab.on {
  background: #3a73ad;
  font-weight: 700;
}
.box-index {
  height: 19px;
  box-sizing: border-box;
  line-height: 18px;
  border: 1px solid #474c52;
  border-top: none;
}
.box-pair {
  height: 19px;
  display: grid;
  grid-template-columns: 229px 230px;
  border: 1px solid #474c52;
  border-top: none;
  box-sizing: border-box;
  line-height: 18px;
}
.box-pair > div + div { border-left: 1px solid #474c52; }
.box-pair.head { font-weight: 700; }

/* board */
.tablewrap {
  margin-top: 9px;
  height: 313px;
  overflow: hidden;
  border-top: 2px solid #5a5e63;
}
.board {
  width: 1423px;
  table-layout: fixed;
  border-collapse: collapse;
  text-align: center;
}
.board th {
  border: 1px solid #4d5257;
  padding: 0;
  font-weight: 400;
  color: #fff;
  white-space: nowrap;
  overflow: hidden;
}
.tr-top { height: 20px; }
.tr-sub { height: 22px; }
.board .big { font-weight: 700; font-size: 13px; }
.board .wide-text { letter-spacing: 0.8px; }
.board .stack { line-height: 21px; }
.dark { background: linear-gradient(#062347, #0b3b78); }
.navy { background: #0b3a78; }
.light { background: #3670aa; }
.board td {
  height: 21px;
  border: 1px solid #4d5257;
  padding: 0 0 2px;
  background: #0b1621;
  white-space: nowrap;
  overflow: hidden;
  box-sizing: border-box;
}
.board td.grey { background: #353e48; }
.board td.sym { text-align: left; padding-left: 6px; }
.tag {
  font-size: 9px;
  margin-left: 5px;
  color: #f00000;
}
.sort {
  display: inline-block;
  width: 0;
  height: 10px;
  margin-left: 3px;
  vertical-align: -1px;
  border-left: 3.500px solid transparent;
  border-right: 3.500px solid transparent;
  position: relative;
}
.sort::before, .sort::after {
  content: "";
  position: absolute;
  left: -3.500px;
  border-left: 3.500px solid transparent;
  border-right: 3.500px solid transparent;
}
.sort::before { top: 0; border-bottom: 4px solid #fff; }
.sort::after { bottom: 0; border-top: 4px solid #fff; }

/* legend */
.legend {
  height: 60px;
  box-sizing: border-box;
  background: #062a52;
  text-align: center;
  line-height: 20px;
}
.watermark {
  position: absolute;
  left: 1143px;
  top: 775px;
  font-family: "Open Sans", sans-serif;
  color: rgba(200, 200, 200, 0.5);
  pointer-events: none;
}
.wm-big { font-size: 19.400px; line-height: 25px; letter-spacing: -0.1px; }
.wm-small { font-size: 14px; line-height: 20px; letter-spacing: 0.2px; }

/* taskbar */
.taskbar {
  height: 40px;
  background: #000;
  display: flex;
  align-items: stretch;
}
.tb-start, .tb-view {
  display: flex;
  align-items: center;
  justify-content: center;
  flex: none;
}
.tb-start { width: 48px; }
.tb-view { width: 47px; }
.tb-app {
  width: 40px;
  margin: 0 4.500px;
  flex: none;
  display: flex;
  align-items: center;
  justify-content: center;
  box-sizing: border-box;
  border-bottom: 2px solid #76b9ed;
}
.tb-app.explorer { margin-left: 8px; }
.tb-app.current {
  background: #3a3a3a;
  width: 48px;
  margin: 0 2px;
}
.tb-app.outlook { margin-left: 1.500px; }
.hsc-icon {
  width: 24px;
  height: 24px;
  background: #fff;
  color: #123c8a;
  font-weight: 700;
  font-size: 10px;
  line-height: 24px;
  text-align: center;
  white-space: nowrap;
}
.hsc-dots { color: #e2531d; }
.tray {
  margin-left: auto;
  display: flex;
  align-items: center;
  position: relative;
  font-family: "Open Sans", sans-serif;
}
.t-people { margin-right: 21px; }
.t-caret { margin-right: 9px; }
.t-net { margin-right: 7px; }
.t-vol { margin-right: 11px; }
.t-lang { width: 26px; letter-spacing: -0.3px; }
.t-clock {
  width: 76px;
  text-align: center;
  font-size: 11.500px;
  line-height: 17.500px;
  letter-spacing: -0.2px;
}
.t-note {
  width: 34px;
  padding-left: 10px;
  box-sizing: border-box;
  position: relative;
  display: flex;
}
.t-badge {
  position: absolute;
  left: 18px;
  top: 7px;
  width: 13px;
  height: 14px;
  border-radius: 50%;
  background: #444;
  font-size: 11px;
  font-weight: 700;
  line-height: 14px;
  text-align: center;
}
</style>

<style>
html, body { margin: 0; background: #000; }
</style>
